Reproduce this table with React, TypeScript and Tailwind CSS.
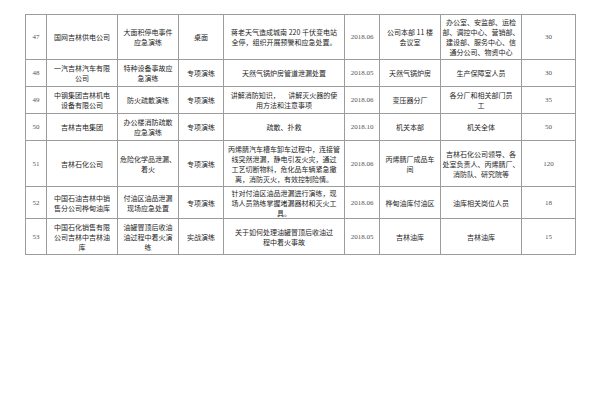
import React from "react";

type Row = {
  no: string;
  unit: string[];
  name: string[];
  type: string;
  content: string[];
  date: string;
  place: string[];
  people: string[];
  count: string;
  h: string;
};

const rows: Row[] = [
  {
    no: "47",
    unit: ["国网吉林供电公司"],
    name: ["大面积停电事件", "应急演练"],
    type: "桌面",
    content: ["蒋老天气造成城南 220 千伏变电站", "全停，组织开展预警和应急处置。"],
    date: "2018.06",
    place: ["公司本部 11 楼", "会议室"],
    people: ["办公室、安监部、运检", "部、调控中心、营销部、", "建设部、服务中心、信", "通分公司、物资中心"],
    count: "30",
    h: "h-[45px]",
  },
  {
    no: "48",
    unit: ["一汽吉林汽车有限", "公司"],
    name: ["特种设备事故应", "急演练"],
    type: "专项演练",
    content: ["天然气锅炉房管道泄漏处置"],
    date: "2018.05",
    place: ["天然气锅炉房"],
    people: ["生产保障室人员"],
    count: "30",
    h: "h-[27px]",
  },
  {
    no: "49",
    unit: ["中钢集团吉林机电", "设备有限公司"],
    name: ["防火疏散演练"],
    type: "专项演练",
    content: ["讲解消防知识，\u2003 讲解灭火器的使", "用方法和注意事项"],
    date: "2018.06",
    place: ["变压器分厂"],
    people: ["各分厂和相关部门员", "工"],
    count: "35",
    h: "h-[27px]",
  },
  {
    no: "50",
    unit: ["吉林吉电集团"],
    name: ["办公楼消防疏散", "应急演练"],
    type: "专项演练",
    content: ["疏散、扑救"],
    date: "2018.10",
    place: ["机关本部"],
    people: ["机关全体"],
    count: "50",
    h: "h-[27px]",
  },
  {
    no: "51",
    unit: ["吉林石化公司"],
    name: ["危险化学品泄漏、", "着火"],
    type: "专项演练",
    content: [
      "丙烯腈汽车槽车卸车过程中，连接管",
      "线突然泄漏，静电引发火灾，通过",
      "工艺切断物料，危化品车辆紧急撤",
      "离，消防灭火，有效控制险情。",
    ],
    date: "2018.06",
    place: ["丙烯腈厂成品车", "间"],
    people: ["吉林石化公司领导、各", "处室负责人、丙烯腈厂、", "消防队、研究院等"],
    count: "120",
    h: "h-[46px]",
  },
  {
    no: "52",
    unit: ["中国石油吉林中销", "售分公司桦甸油库"],
    name: ["付油区油品泄漏", "现场应急处置"],
    type: "专项演练",
    content: ["针对付油区油品泄漏进行演练，现", "场人员熟练掌握堵漏器材和灭火工", "具。"],
    date: "2018.06",
    place: ["桦甸油库付油区"],
    people: ["油库相关岗位人员"],
    count: "18",
    h: "h-[32px]",
  },
  {
    no: "53",
    unit: ["中国石化销售有限", "公司吉林中吉林油", "库"],
    name: ["油罐冒顶后收油", "油过程中着火演", "练"],
    type: "实战演练",
    content: ["关于如何处理油罐冒顶后收油过", "程中着火事故"],
    date: "2018.05",
    place: ["吉林油库"],
    people: ["吉林油库"],
    count: "15",
    h: "h-[36px]",
  },
];

function Lines({ lines }: { lines: string[] }) {
  return (
    <>
      {lines.map((l, i) => (
        <div key={i} className="whitespace-nowrap">
          {l}
        </div>
      ))}
    </>
  );
}

const td = "border border-[#9c9c9c] text-center align-middle p-0 overflow-hidden";
const cjk = "[font-family:'Noto_Sans_CJK_SC','Noto_Sans',sans-serif]";
const num = "[font-family:'Liberation_Serif','Times_New_Roman',serif] text-[#555]";

export default function App() {
  return (
    <div className="w-[600px] h-[400px] bg-white pt-[14px] pl-[25px]">
      <table className={`table-fixed border-collapse w-[550px] text-[7px] leading-[10px] text-[#262626] ${cjk}`}>
        <colgroup>
          <col className="w-[21px]" />
          <col className="w-[71px]" />
          <col className="w-[61px]" />
          <col className="w-[45px]" />
          <col className="w-[121px]" />
          <col className="w-[35px]" />
          <col className="w-[61px]" />
          <col className="w-[81px]" />
          <col className="w-[54px]" />
        </colgroup>
        <tbody>
          {rows.map((r) => (
            <tr key={r.no} className={r.h}>
              <td className={`${td} ${num} text-[7px]`}>{r.no}</td>
              <td className={td}>
                <Lines lines={r.unit} />
              </td>
              <td className={td}>
                <Lines lines={r.name} />
              </td>
              <td className={td}>{r.type}</td>
              <td className={td}>
                <Lines lines={r.content} />
              </td>
              <td className={`${td} ${num} text-[7px]`}>{r.date}</td>
              <td className={td}>
                <Lines lines={r.place} />
              </td>
              <td className={td}>
                <Lines lines={r.people} />
              </td>
              <td className={`${td} ${num} text-[7px]`}>{r.count}</td>
            </tr>
          ))}
        </tbody>
      </table>
    </div>
  );
}
